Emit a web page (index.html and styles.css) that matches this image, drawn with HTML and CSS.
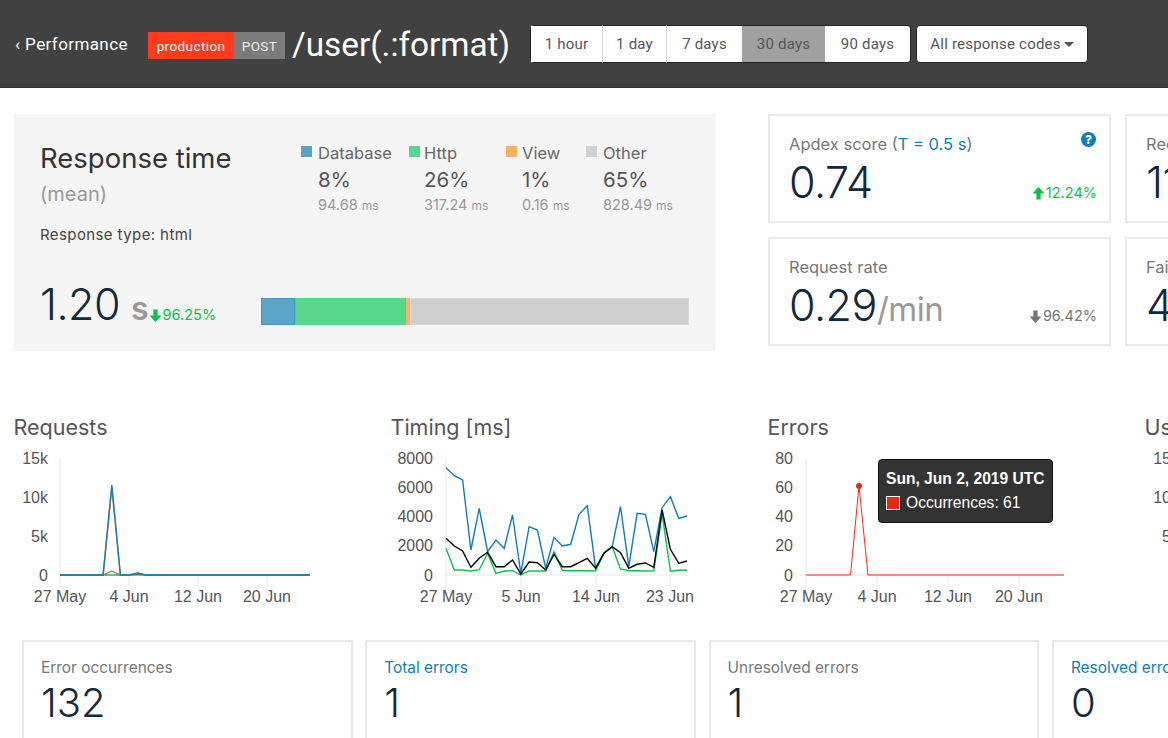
FILE: index.html
```html
<!DOCTYPE html>
<html lang="en">
<head>
    <meta charset="UTF-8">
    <meta name="viewport" content="width=device-width, initial-scale=1.0">
    <title>Performance - /user(.:format)</title>
    <link rel="stylesheet" href="styles.css">
</head>
<body>

    <header class="topbar">
        <a class="back-link" href="#">‹ Performance</a>
        <div class="labels">
            <span class="label label-env">production</span>
            <span class="label label-method">POST</span>
        </div>
        <h1 class="route">/user(.:format)</h1>
        <div class="range-group">
            <button class="range-btn range-hour">1 hour</button>
            <button class="range-btn range-day">1 day</button>
            <button class="range-btn range-week">7 days</button>
            <button class="range-btn range-month active">30 days</button>
            <button class="range-btn range-quarter">90 days</button>
        </div>
        <button class="codes-btn">All response codes<span class="caret"></span></button>
    </header>

    <section class="summary">
        <div class="panel">
            <div class="panel-head">
                <div class="panel-title">
                    <h2 class="panel-heading">Response time</h2>
                    <div class="panel-mean">(mean)</div>
                    <div class="panel-type">Response type: html</div>
                </div>
                <div class="legend">
                    <div class="legend-item legend-db">
                        <span class="swatch swatch-db"></span>
                        <div>
                            <div class="legend-name">Database</div>
                            <div class="legend-pct">8%</div>
                            <div class="legend-ms">94.68 <small>ms</small></div>
                        </div>
                    </div>
                    <div class="legend-item legend-http">
                        <span class="swatch swatch-http"></span>
                        <div>
                            <div class="legend-name">Http</div>
                            <div class="legend-pct">26%</div>
                            <div class="legend-ms">317.24 <small>ms</small></div>
                        </div>
                    </div>
                    <div class="legend-item legend-view">
                        <span class="swatch swatch-view"></span>
                        <div>
                            <div class="legend-name">View</div>
                            <div class="legend-pct">1%</div>
                            <div class="legend-ms">0.16 <small>ms</small></div>
                        </div>
                    </div>
                    <div class="legend-item legend-other">
                        <span class="swatch swatch-other"></span>
                        <div>
                            <div class="legend-name">Other</div>
                            <div class="legend-pct">65%</div>
                            <div class="legend-ms">828.49 <small>ms</small></div>
                        </div>
                    </div>
                </div>
            </div>
            <div class="panel-foot">
                <div class="panel-value">
                    <span class="big-number">1.20</span>
                    <span class="panel-unit">s</span>
                    <span class="delta delta-good">
                        <svg class="arrow" viewBox="0 0 12 12"><path d="M4 0.5h4v5.5h3.5l-5.500 6-5.500-6h3.500z"/></svg>96.25%
                    </span>
                </div>
                <div class="stack-bar">
                    <div class="stack stack-db"></div>
                    <div class="stack stack-http"></div>
                    <div class="stack stack-view"></div>
                    <div class="stack stack-other"></div>
                </div>
            </div>
        </div>

        <div class="tiles">
            <div class="tile">
                <div class="tile-label">Apdex score (<a class="link" href="#">T = 0.5 s</a>)</div>
                <span class="help">?</span>
                <div class="tile-row">
                    <span class="big-number">0.74</span>
                    <span class="delta delta-good">
                        <svg class="arrow" viewBox="0 0 12 12"><path d="M4 11.500h4v-5.500h3.500l-5.500-6-5.500 6h3.500z"/></svg>12.24%
                    </span>
                </div>
            </div>
            <div class="tile">
                <div class="tile-label">Recent</div>
                <div class="tile-row"><span class="big-number">11</span></div>
            </div>
            <div class="tile">
                <div class="tile-label">Request rate</div>
                <div class="tile-row">
                    <span class="big-number">0.29<span class="per-unit">/min</span></span>
                    <span class="delta delta-flat">
                        <svg class="arrow" viewBox="0 0 12 12"><path d="M4 0.500h4v5.500h3.500l-5.500 6-5.500-6h3.500z"/></svg>96.42%
                    </span>
                </div>
            </div>
            <div class="tile">
                <div class="tile-label">Failed</div>
                <div class="tile-row"><span class="big-number">4</span></div>
            </div>
        </div>
    </section>

    <section class="charts">
        <div class="chart">
            <h3 class="chart-title">Requests</h3>
            <svg class="plot" width="363" height="160" viewBox="0 0 363 160">
                <g class="grid">
                    <line x1="46" y1="10" x2="46" y2="139"/>
                    <line x1="115" y1="127" x2="115" y2="139"/>
                    <line x1="184" y1="127" x2="184" y2="139"/>
                    <line x1="253" y1="127" x2="253" y2="139"/>
                    <line x1="46" y1="127" x2="296" y2="127"/>
                </g>
                <g class="tick-y">
                    <text x="34" y="15.500">15k</text>
                    <text x="34" y="54.500">10k</text>
                    <text x="34" y="93.500">5k</text>
                    <text x="34" y="132.500">0</text>
                </g>
                <g class="tick-x">
                    <text x="46" y="153.500">27 May</text>
                    <text x="115" y="153.500">4 Jun</text>
                    <text x="184" y="153.500">12 Jun</text>
                    <text x="253" y="153.500">20 Jun</text>
                </g>
                <polyline class="line line-green" points="46,127 115,127 123.700,126 132.300,127 296,127"/>
                <polyline class="line line-red" points="46,127 89.100,127 97.800,123 106.400,127 296,127"/>
                <polyline class="line line-orange" points="89.100,127 97.800,40 106.400,127"/>
                <polyline class="line line-blue" points="46,127 89.100,127 97.800,37 106.400,127 115,127 123.700,125 132.300,127 296,127"/>
            </svg>
        </div>

        <div class="chart">
            <h3 class="chart-title">Timing [ms]</h3>
            <svg class="plot" width="363" height="160" viewBox="0 0 363 160">
                <g class="grid">
                    <line x1="55" y1="10" x2="55" y2="139"/>
                    <line x1="130" y1="127" x2="130" y2="139"/>
                    <line x1="205" y1="127" x2="205" y2="139"/>
                    <line x1="279" y1="127" x2="279" y2="139"/>
                    <line x1="55" y1="127" x2="296" y2="127"/>
                </g>
                <g class="tick-y">
                    <text x="42" y="15.500">8000</text>
                    <text x="42" y="44.750">6000</text>
                    <text x="42" y="74">4000</text>
                    <text x="42" y="103.250">2000</text>
                    <text x="42" y="132.500">0</text>
                </g>
                <g class="tick-x">
                    <text x="55" y="153.500">27 May</text>
                    <text x="130" y="153.500">5 Jun</text>
                    <text x="205" y="153.500">14 Jun</text>
                    <text x="279" y="153.500">23 Jun</text>
                </g>
                <polyline class="line line-blue" points="55,19.700 63.300,27.700 71.600,32 79.900,102 88.200,60.300 96.600,103.700 104.900,92 113.200,100.300 121.500,67 129.800,125.300 138.100,78.700 146.400,82 154.700,120.300 163,89.300 171.300,98 179.700,96.300 188,66.300 196.300,57.700 204.600,120.300 212.900,105.300 221.200,98.700 229.500,58.700 237.800,118.700 246.100,65.300 254.400,66.300 262.800,103.700 271.100,59.700 279.400,48.700 287.700,70.300 296,68"/>
                <polyline class="line line-green" points="55,100.300 63.300,122 71.600,122 79.900,123 88.200,121.700 96.600,105.300 104.900,125.300 113.200,123 121.500,122.700 129.800,127 138.100,123 146.400,123 154.700,123 163,103.700 171.300,122.300 179.700,122.700 188,122.700 196.300,122.700 204.600,123 212.900,105.300 221.200,98.700 229.500,121 237.800,122.700 246.100,122.700 254.400,123 262.800,122.700 271.100,65.300 279.400,123.300 287.700,122.300 296,122.300"/>
                <polyline class="line line-black" points="55,90.300 63.300,98 71.600,103 79.900,119.300 88.200,110.300 96.600,104.300 104.900,118.700 113.200,118.700 121.500,112 129.800,126 138.100,114 146.400,114.700 154.700,122 163,106.300 171.300,118.700 179.700,118.700 188,114.700 196.300,110.300 204.600,120.300 212.900,105.300 221.200,98.700 229.500,104.700 237.800,120.300 246.100,116.300 254.400,115 262.800,119.300 271.100,62 279.400,101.300 287.700,115.300 296,113"/>
            </svg>
        </div>

        <div class="chart">
            <h3 class="chart-title">Errors</h3>
            <svg class="plot" width="363" height="160" viewBox="0 0 363 160">
                <g class="grid">
                    <line x1="38" y1="10" x2="38" y2="139"/>
                    <line x1="109" y1="127" x2="109" y2="139"/>
                    <line x1="180" y1="127" x2="180" y2="139"/>
                    <line x1="251" y1="127" x2="251" y2="139"/>
                    <line x1="38" y1="127" x2="296" y2="127"/>
                </g>
                <g class="tick-y">
                    <text x="25" y="15.500">80</text>
                    <text x="25" y="44.750">60</text>
                    <text x="25" y="74">40</text>
                    <text x="25" y="103.250">20</text>
                    <text x="25" y="132.500">0</text>
                </g>
                <g class="tick-x">
                    <text x="38" y="153.500">27 May</text>
                    <text x="109" y="153.500">4 Jun</text>
                    <text x="180" y="153.500">12 Jun</text>
                    <text x="251" y="153.500">20 Jun</text>
                </g>
                <polyline class="line line-red" points="38,127 82.500,127 91,38 100,127 296,127"/>
                <circle class="point" cx="91" cy="38" r="3"/>
            </svg>
            <div class="tooltip">
                <div class="tooltip-title">Sun, Jun 2, 2019 UTC</div>
                <div class="tooltip-row"><span class="tooltip-swatch"></span>Occurrences: 61</div>
            </div>
        </div>

        <div class="chart">
            <h3 class="chart-title">Users</h3>
            <svg class="plot" width="363" height="160" viewBox="0 0 363 160">
                <g class="tick-y">
                    <text x="34" y="15.500">15k</text>
                    <text x="34" y="54.500">10k</text>
                    <text x="34" y="93.500">5k</text>
                </g>
            </svg>
        </div>
    </section>

    <section class="error-tiles">
        <div class="error-tile">
            <div class="error-label">Error occurrences</div>
            <div class="error-value">132</div>
        </div>
        <div class="error-tile">
            <div class="error-label"><a class="link" href="#">Total errors</a></div>
            <div class="error-value">1</div>
        </div>
        <div class="error-tile">
            <div class="error-label">Unresolved errors</div>
            <div class="error-value">1</div>
        </div>
        <div class="error-tile">
            <div class="error-label"><a class="link" href="#">Resolved errors</a></div>
            <div class="error-value">0</div>
        </div>
    </section>

</body>
</html>
```

FILE: styles.css
```css
html, body {
    margin: 0;
    height: 738px;
    overflow: hidden;
}
body {
    width: 1168px;
    background: #fff;
    font-family: Inter, "Noto Sans", sans-serif;
    color: #555;
}
a {
    text-decoration: none;
}
.link {
    color: #0f7db8;
}

/* top bar */
.topbar {
    display: flex;
    align-items: center;
    height: 87px;
    background: #414141;
    border-bottom: 1px solid #333;
    padding-left: 15px;
}
.back-link {
    width: 133px;
    color: #fff;
    font-family: Roboto, sans-serif;
    font-size: 17px;
    letter-spacing: .4px;
}
.labels {
    display: flex;
    margin-top: 3px;
}
.label {
    display: flex;
    align-items: center;
    justify-content: center;
    height: 27px;
    padding-top: 2px;
    box-sizing: border-box;
    font-family: Roboto, sans-serif;
    font-size: 13.500px;
    letter-spacing: .4px;
    color: #fff;
}
.label-env {
    width: 86px;
    background: #ff3a1d;
}
.label-method {
    width: 51px;
    background: #7b7b7b;
    color: #eee;
}
.route {
    width: 238px;
    margin: 2px 0 0 7px;
    color: #fff;
    font-family: Roboto, sans-serif;
    font-size: 33.300px;
    font-weight: 400;
    white-space: nowrap;
}
.range-group {
    display: flex;
    height: 38px;
    border-radius: 4px;
    overflow: hidden;
}
.range-btn, .codes-btn {
    height: 38px;
    padding: 0;
    background: #fff;
    border: 1px solid #222;
    border-width: 1px 0;
    color: #555;
    font-family: Roboto, sans-serif;
    font-size: 15px;
    letter-spacing: .2px;
}
.range-btn {
    border-right: 1px solid #ddd;
}
.range-hour { width: 73px; border-left: 1px solid #222; }
.range-day { width: 64px; }
.range-week { width: 75px; border-right: 0; }
.range-month { width: 83px; border-right: 0; }
.range-quarter { width: 86px; border-right: 1px solid #222; border-radius: 0 4px 4px 0; }
.range-btn.active {
    background: #a0a0a0;
}
.codes-btn {
    width: 172px;
    margin-left: 5px;
    border: 1px solid #222;
    border-radius: 4px;
}
.caret {
    display: inline-block;
    margin-left: 3px;
    vertical-align: 2px;
    border: 5px solid transparent;
    border-top-color: #555;
    border-bottom-width: 0;
}

/* summary */
.summary {
    display: flex;
    margin: 26px 0 0 14px;
    align-items: flex-start;
}
.panel {
    flex: none;
    width: 701px;
    height: 237px;
    padding: 26px 0 0 26px;
    box-sizing: border-box;
    background: #f5f5f5;
}
.panel-head {
    display: flex;
    height: 138px;
}
.panel-title {
    flex: none;
    width: 261px;
}
.panel-heading {
    margin: 0;
    font-size: 27.500px;
    font-weight: 400;
    line-height: 36px;
    color: #333;
}
.panel-mean {
    margin-top: 3px;
    font-size: 20px;
    line-height: 30px;
    color: #999;
}
.panel-type {
    margin-top: 16px;
    font-size: 15px;
    line-height: 20px;
    color: #444;
    letter-spacing: .4px;
}
.legend {
    display: flex;
    margin-top: 2px;
}
.legend-item {
    display: flex;
    gap: 6px;
    flex: none;
}
.legend-db { width: 108px; }
.legend-http { width: 97px; gap: 4px; }
.legend-view { width: 80px; gap: 5px; }
.swatch {
    flex: none;
    width: 11px;
    height: 11px;
    margin-top: 4px;
}
.swatch-db { background: #58a4c9; }
.swatch-http { background: #58d68b; }
.swatch-view { background: #fdb165; }
.swatch-other { background: #d0d0d0; }
.legend-name {
    font-size: 16.500px;
    line-height: 22px;
    color: #666;
}
.legend-pct {
    margin-top: 2px;
    font-size: 20.500px;
    line-height: 28px;
}
.legend-ms {
    margin-top: 1px;
    font-size: 14.500px;
    line-height: 20px;
    color: #999;
    white-space: nowrap;
}
.legend-ms small {
    font-size: 12px;
}
.panel-foot {
    display: flex;
    height: 52px;
}
.panel-value {
    flex: none;
    width: 221px;
    display: flex;
    align-items: baseline;
    white-space: nowrap;
}
.big-number {
    font-size: 43px;
    font-weight: 300;
    line-height: 52px;
    letter-spacing: -.5px;
    color: #11293b;
}
.panel-unit {
    margin-left: 11px;
    font-size: 32px;
    font-weight: 600;
    color: #999;
}
.delta {
    font-size: 14.500px;
    white-space: nowrap;
}
.delta-good { color: #0cc24d; }
.delta-flat { color: #777; }
.arrow {
    width: 13px;
    height: 13px;
    margin-right: 1px;
    vertical-align: -2px;
    fill: currentColor;
}
.stack-bar {
    display: flex;
    width: 428px;
    height: 27px;
    margin-top: 20px;
}
.stack { height: 100%; box-sizing: border-box; border: 1px solid transparent; }
.stack-db { width: 34px; background: #5ba5c8; border-color: #4a94bf; }
.stack-http { width: 111px; background: #58d68b; border-color: #58d68b #4fcf83; }
.stack-view { width: 4px; background: #fdb165; }
.stack-other { flex: 1; background: #cfcfcf; border-color: #d8d8d8; }

.tiles {
    display: grid;
    grid-template-columns: 343px 343px;
    grid-auto-rows: 109px;
    gap: 14px;
    margin-left: 53px;
}
.tile {
    position: relative;
    padding: 18px 12px 0 19px;
    border: 2px solid #e9e9e9;
    box-sizing: border-box;
}
.tile-label {
    font-size: 16.500px;
    line-height: 20px;
    color: #777;
    white-space: nowrap;
}
.tile-row {
    display: flex;
    justify-content: space-between;
    align-items: baseline;
    margin-top: 2px;
}
.per-unit {
    font-size: 33px;
    font-weight: 400;
    color: #999;
}
.help {
    position: absolute;
    top: 16px;
    right: 13px;
    width: 15px;
    height: 15px;
    border-radius: 50%;
    background: #0f7db8;
    color: #fff;
    font-size: 12px;
    font-weight: 800;
    line-height: 15px;
    text-align: center;
}

/* charts */
.charts {
    display: flex;
    gap: 14px;
    margin: 63px 0 0 14px;
}
.chart {
    position: relative;
    flex: none;
    width: 363px;
}
.chart-title {
    margin: 0 0 8px;
    font-size: 21.500px;
    font-weight: 400;
    line-height: 26px;
    color: #555;
    text-indent: -.5px;
}
.plot {
    display: block;
    overflow: visible;
}
.plot text {
    font-family: "Liberation Sans", Arial, sans-serif;
    font-size: 16px;
    fill: #555;
}
.grid line {
    stroke: #e6e6e6;
    stroke-width: 1;
}
.tick-y text { text-anchor: end; }
.tick-x text { text-anchor: middle; }
.line {
    fill: none;
    stroke-width: 1.400;
}
.line-blue { stroke: #0f7db8; }
.line-green { stroke: #0cc24d; }
.line-black { stroke: #000; }
.line-red { stroke: #f5281c; stroke-width: 1; }
.line-orange { stroke: #f58220; }
.point { fill: #e52b15; }
.tooltip {
    position: absolute;
    left: 110px;
    top: 45px;
    width: 175px;
    height: 64px;
    padding: 10px 7px;
    box-sizing: border-box;
    background: #333;
    border: 1px solid #111;
    border-radius: 4px;
    color: #fff;
    font-family: "Liberation Sans", Arial, sans-serif;
    font-size: 15.600px;
}
.tooltip-title {
    font-weight: 700;
    line-height: 18px;
    white-space: nowrap;
}
.tooltip-row {
    display: flex;
    align-items: center;
    gap: 6px;
    margin-top: 6px;
    line-height: 18px;
}
.tooltip-swatch {
    width: 14px;
    height: 14px;
    box-sizing: border-box;
    border: 1px solid #fff;
    background: #e52b15;
}

/* error tiles */
.error-tiles {
    display: flex;
    gap: 12.800px;
    margin: 32px 0 0 22px;
}
.error-tile {
    flex: none;
    width: 330.500px;
    height: 140px;
    padding: 16px 17px;
    box-sizing: border-box;
    border: 2px solid #e9e9e9;
}
.error-label {
    font-size: 15.400px;
    line-height: 20px;
    color: #777;
    white-space: nowrap;
}
.error-value {
    margin-top: 2px;
    font-size: 40px;
    font-weight: 300;
    line-height: 46px;
    color: #11293b;
}
```
